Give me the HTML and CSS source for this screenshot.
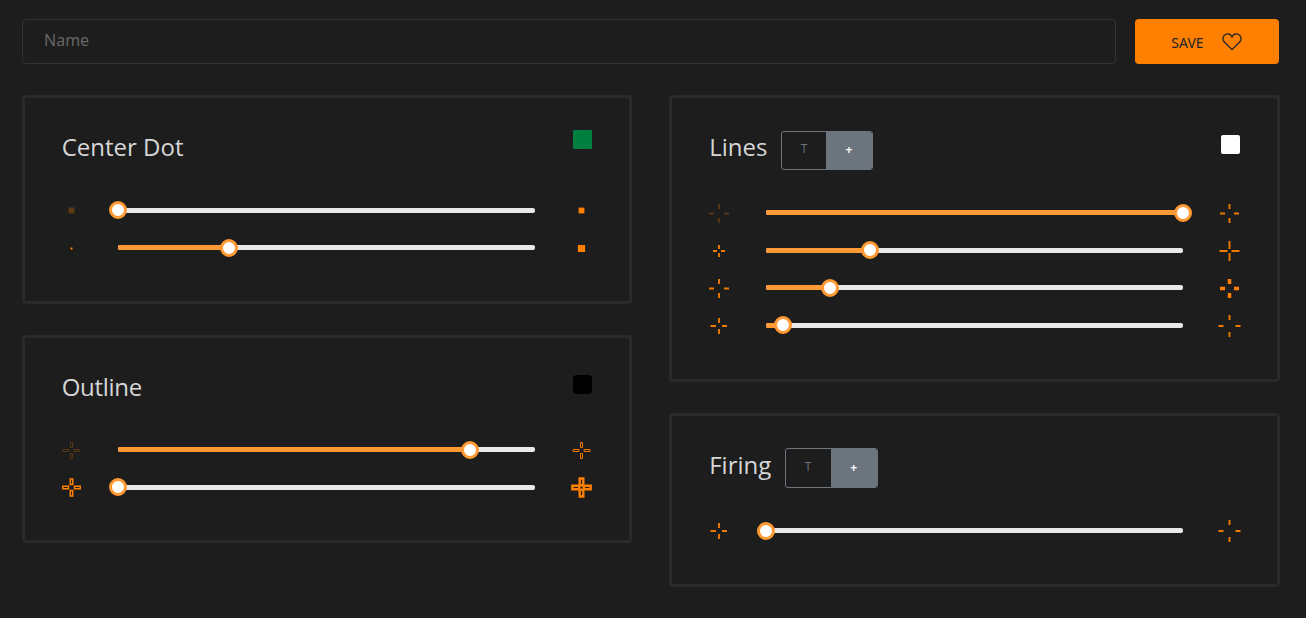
FILE: index.html
```
<!DOCTYPE html>
<html lang="en">
<head>
<meta charset="utf-8">
<title>Crosshair editor</title>
<link rel="stylesheet" href="styles.css">
</head>
<body>
<form class="topbar">
  <input class="name" type="text" placeholder="Name">
  <button class="save" type="button"><span>SAVE</span>
    <svg class="heart" viewBox="0 0 20 18"><path d="M10 16.6 L2.4 9 C-.2 6.2.9 2 4.2 1.2 C6.8.5 9 1.8 10 4 C11 1.8 13.2.5 15.8 1.2 C19.1 2 20.2 6.2 17.6 9 Z"/></svg>
  </button>
</form>
<main class="columns">
  <div class="column">
    <section class="card dot">
      <header class="head"><h2>Center Dot</h2><i class="swatch green"></i></header>
      <div class="row"><svg class="icon faint" viewBox="-11.5 -12.5 24 24"><path class="fill" d="M-3-3h6v6h-6z"/></svg><div class="track"><i class="value" style="width:0%"></i><i class="thumb" style="left:0%"></i></div><svg class="icon" viewBox="-11.5 -12.5 24 24"><path class="fill" d="M-2.9-2.9h5.8v5.8h-5.800z"/></svg></div>
      <div class="row"><svg class="icon" viewBox="-11.5 -12.5 24 24"><path class="fill" d="M-1-1h2v2h-2z"/></svg><div class="track"><i class="value" style="width:26.6%"></i><i class="thumb" style="left:26.6%"></i></div><svg class="icon" viewBox="-11.5 -12.5 24 24"><path class="fill" d="M-3.6-3.5h7.2v7h-7.2z"/></svg></div>
    </section>
    <section class="card outline">
      <header class="head"><h2>Outline</h2><i class="swatch black"></i></header>
      <div class="row"><svg class="icon faint" viewBox="-11.5 -12.5 24 24"><path class="thin" d="M-1-8h2v5h-2zM-1 3h2v5h-2zM-8.5-1h6v2h-6zM2.5-1h6v2h-6z"/></svg><div class="track"><i class="value" style="width:84.4%"></i><i class="thumb" style="left:84.4%"></i></div><svg class="icon" viewBox="-11.5 -12.5 24 24"><path class="thin" d="M-1-8h2v5h-2zM-1 3h2v5h-2zM-8.5-1h6v2h-6zM2.5-1h6v2h-6z"/></svg></div>
      <div class="row"><svg class="icon" viewBox="-11.5 -12.5 24 24"><path class="medium" d="M-1.2-8.5h2.4v5.5h-2.4zM-1.2 3h2.4v5.5h-2.4zM-8.7-1.2h5.7v2.4h-5.7zM3-1.2h5.7v2.4h-5.7z"/></svg><div class="track"><i class="value" style="width:0%"></i><i class="thumb" style="left:0%"></i></div><svg class="icon" viewBox="-11.5 -12.5 24 24"><path class="thick" d="M-1.8-9h3.6v6.8h-3.6zM-1.8 2.2h3.6v6.8h-3.6zM-9.2-1.8h7v3.6h-7zM2.2-1.8h7v3.6h-7z"/></svg></div>
    </section>
  </div>
  <div class="column">
    <section class="card lines">
      <header class="head"><h2>Lines</h2><div class="toggle"><span>T</span><span class="on">+</span></div><i class="swatch white"></i></header>
      <div class="row"><svg class="icon faint" viewBox="-12 -12.5 24 24"><path d="M0-9.5v5M0 4.5v5M-10 0h5M5 0h5"/></svg><div class="track"><i class="value" style="width:100%"></i><i class="thumb" style="left:100%"></i></div><svg class="icon" viewBox="-11.5 -12.5 24 24"><path d="M0-9.5v5M0 4.5v5M-9.5 0h5M4.5 0h5"/></svg></div>
      <div class="row"><svg class="icon" viewBox="-12 -13 24 24"><path d="M0-6v4M0 2v4M-6 0h4M2 0h4"/></svg><div class="track"><i class="value" style="width:25%"></i><i class="thumb" style="left:25%"></i></div><svg class="icon" viewBox="-11.5 -13 24 24"><path d="M0-10v8M0 2v8M-10 0h8M2 0h8"/></svg></div>
      <div class="row"><svg class="icon" viewBox="-12 -12.5 24 24"><path d="M0-9.5v5M0 4.5v5M-10 0h5M5 0h5"/></svg><div class="track"><i class="value" style="width:15.4%"></i><i class="thumb" style="left:15.4%"></i></div><svg class="icon" viewBox="-11.5 -12.5 24 24"><path class="wide" d="M0-9.5v5M0 4.5v5M-9.5 0h5M4.5 0h5"/></svg></div>
      <div class="row"><svg class="icon" viewBox="-12 -13 24 24"><path d="M0-8v5M0 3v5M-8.5 0h5.5M3 0h5"/></svg><div class="track"><i class="value" style="width:4%"></i><i class="thumb" style="left:4%"></i></div><svg class="icon" viewBox="-11.5 -13 24 24"><path d="M0-11v5M0 6v5M-11 0h5M6 0h5"/></svg></div>
    </section>
    <section class="card firing">
      <header class="head"><h2>Firing</h2><div class="toggle tall"><span>T</span><span class="on">+</span></div></header>
      <div class="row"><svg class="icon" viewBox="-12 -12 24 24"><path d="M0-8v5M0 3v5M-8.5 0h5.5M3 0h5"/></svg><div class="track"><i class="value" style="width:0%"></i><i class="thumb" style="left:0%"></i></div><svg class="icon" viewBox="-11.5 -12 24 24"><path d="M0-11v5M0 6v5M-11 0h5M6 0h5"/></svg></div>
    </section>
  </div>
</main>
</body>
</html>
```
FILE: styles.css
```
* { box-sizing: border-box; }
body {
  margin: 0;
  padding: 19px 26px 0 22px;
  height: 618px;
  overflow: hidden;
  background: #1d1d1d;
  color: #d6d6d6;
  font-family: "Open Sans", "Noto Sans", sans-serif;
}
.topbar { display: flex; gap: 19px; padding-right: 1px; height: 45px; }
.name {
  flex: 1;
  padding: 0 21px 3px;
  border: 1px solid #333;
  border-radius: 4px;
  background: transparent;
  font: 16px "Noto Sans", sans-serif;
}
.name::placeholder { color: #666; opacity: 1; }
.save {
  display: flex;
  align-items: center;
  gap: 18px;
  width: 144px;
  padding: 1px 0 0 36px;
  border: 0;
  border-radius: 4px;
  background: #ff8000;
  color: #212529;
  font: 14px "Noto Sans", sans-serif;
}
.save span { width: 33px; }
.heart { width: 20px; height: 18px; fill: none; stroke: #212529; stroke-width: 1.3; }
.columns { display: grid; grid-template-columns: 610px 611px; gap: 37px; margin-top: 31px; }
.column { display: flex; flex-direction: column; gap: 31px; }
.card { border: 3px solid #2a2a2a; border-radius: 4px; padding-left: 34.5px; }
.dot { height: 209px; }
.outline { height: 208px; }
.lines { height: 287px; padding-left: 35px; }
.firing { height: 174px; padding-left: 35px; }
.head { display: flex; align-items: flex-start; padding: 0 37px 0 2.2px; height: 93.6px; }
.outline .head { height: 93px; }
.outline h2 { letter-spacing: -.3px; }
.lines .head { height: 96px; }
.firing .head { height: 96px; }
h2 { margin: 0; padding-top: 33px; font-size: 24px; font-weight: 400; line-height: 32px; }
.swatch { width: 19px; height: 19px; margin-left: auto; }
.green { margin-top: 32px; border-radius: 1px; background: #008040; }
.black { margin-top: 37px; border-radius: 4px; background: #000; }
.white { margin-top: 37px; border-radius: 2px; background: #fff; }
.toggle {
  display: flex;
  width: 92px;
  height: 39px;
  margin: 33px 0 0 13.4px;
  border: 1px solid #6c757d;
  border-radius: 3px;
  overflow: hidden;
  font-size: 12px;
  line-height: 34px;
  text-align: center;
  color: #6c757d;
}
.tall { width: 93px; height: 40px; margin-top: 32px; line-height: 36px; }
.toggle span { flex: 0 0 44.5px; }
.toggle .on { flex: 1; background: #6c757d; color: #fff; font-weight: 700; line-height: 36px; }
.tall span { flex-basis: 45px; }
.tall .on { line-height: 37px; }
.row { display: flex; align-items: center; gap: 34.5px; height: 37.5px; }
.lines .row, .firing .row { gap: 35px; }
.icon { flex: none; width: 24px; height: 24px; overflow: visible; fill: none; stroke: #f07900; stroke-width: 1.9; }
.faint { opacity: .28; }
.fill { fill: #ff8000; stroke: none; }
.thin { stroke-width: 1; }
.medium { stroke: #ff8000; stroke-width: 1.5; }
.thick { stroke: #ff8000; stroke-width: 2.4; }
.wide { stroke: #ff8000; stroke-width: 3.5; }
.track { position: relative; width: 417px; height: 5px; border-radius: 2px; background: #e9e9e9; }
.value { display: block; height: 5px; border-radius: 2px 0 0 2px; background: #ff9933; }
.thumb {
  position: absolute;
  top: -6.5px;
  width: 18px;
  height: 18px;
  margin-left: -9px;
  border: 3px solid #ff9933;
  border-radius: 50%;
  background: #fff;
}
```
